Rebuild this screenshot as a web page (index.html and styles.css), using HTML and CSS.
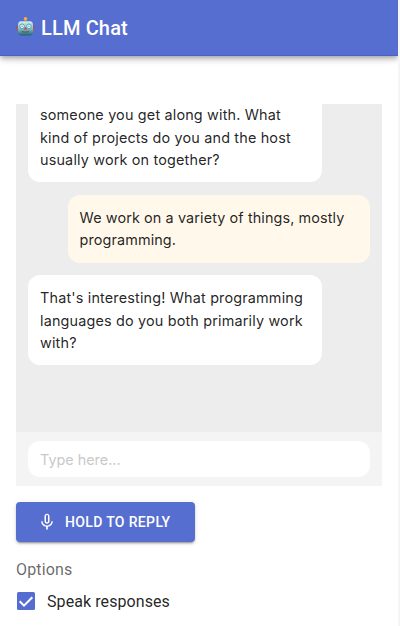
FILE: index.html
```html
<!DOCTYPE html>
<html lang="en">
<head>
<meta charset="utf-8">
<title>LLM Chat</title>
<link rel="stylesheet" href="styles.css">
</head>
<body>
<div class="app">
  <header class="app-bar">
    <svg class="robot" viewBox="0 0 18 19" aria-hidden="true">
      <defs>
        <linearGradient id="face" x1="0" y1="0" x2="0" y2="1">
          <stop offset="0" stop-color="#d3eeee"/><stop offset=".5" stop-color="#8fc0c6"/><stop offset="1" stop-color="#1c6475"/>
        </linearGradient>
      </defs>
      <path d="M8.200 2.500h1.600v3H8.200z" fill="#b3614e"/>
      <circle cx="9" cy="1.900" r="1.800" fill="#eeb13c"/>
      <rect x="0" y="9" width="18" height="5" rx="1.200" fill="#a84961"/>
      <path d="M4.500 4.200h9q2.700 0 2.900 3l.4 7q0 4.300-4 4.300H5.200q-4 0-4-4.300l.4-7q.2-3 2.900-3z" fill="url(#face)"/>
      <circle cx="5.600" cy="9.300" r="2.300" fill="#d9fbfc" stroke="#3d929d" stroke-width=".8"/>
      <circle cx="12.400" cy="9.300" r="2.300" fill="#d9fbfc" stroke="#3d929d" stroke-width=".8"/>
      <circle cx="5.600" cy="9.300" r=".8" fill="#68b7c4"/><circle cx="12.400" cy="9.300" r=".8" fill="#68b7c4"/>
      <path d="M9 9.800l1.600 2.600H7.400z" fill="#d9343d"/>
      <path d="M5.500 14.400q3.500 1.100 7 0" fill="none" stroke="#654f5c" stroke-width="1.100"/>
    </svg>
    <h1 class="title">LLM Chat</h1>
  </header>
  <main class="content">
    <section class="chat">
      <div class="messages">
        <div class="bubble">someone you get along with. What<br>kind of projects do you and the host<br>usually work on together?</div>
        <div class="bubble mine">We work on a variety of things, mostly<br>programming.</div>
        <div class="bubble">That's interesting! What programming<br>languages do you both primarily work<br>with?</div>
      </div>
      <div class="composer"><input class="field" type="text" placeholder="Type here..." aria-label="Message"></div>
    </section>
    <button class="reply" type="button">
      <svg class="mic" viewBox="0 0 24 24" aria-hidden="true"><path fill="currentColor" d="M12 14c1.660 0 3-1.340 3-3V5c0-1.660-1.340-3-3-3S9 3.340 9 5v6c0 1.660 1.340 3 3 3zm-1.200-9.100c0-.66.54-1.200 1.200-1.200s1.200.54 1.200 1.200l-.01 6.200c0 .66-.53 1.200-1.190 1.200s-1.200-.54-1.200-1.200V4.900zm6.500 6.100c0 3-2.540 5.100-5.300 5.100S6.700 14 6.700 11H5c0 3.410 2.720 6.230 6 6.720V21h2v-3.280c3.280-.48 6-3.300 6-6.720h-1.700z"/></svg>
      <span>HOLD TO REPLY</span>
    </button>
    <h2 class="options">Options</h2>
    <div class="option">
      <svg class="check" viewBox="0 0 18 18" aria-hidden="true"><rect width="18" height="18" rx="1.500" fill="#556cd0"/><path d="M2.700 9.300L7 13.600 15.300 5.200" fill="none" stroke="#fff" stroke-width="2"/></svg>
      <span>Speak responses</span>
    </div>
  </main>
</div>
</body>
</html>
```
FILE: styles.css
```css
* { box-sizing: border-box; }

body {
  margin: 0;
  height: 626px;
  overflow: hidden;
  background: #f5f5f5;
  color: rgba(0, 0, 0, 0.87);
  font-family: Roboto, sans-serif;
}

.app {
  width: 398px;
  height: 626px;
  overflow: hidden;
  background: #fff;
}

.app-bar {
  display: flex;
  align-items: center;
  height: 56px;
  padding: 0 16px;
  background: #566ecf;
  border-bottom: 1px solid #4a61d0;
  color: #fff;
  box-shadow: 0 2px 4px -1px rgba(0, 0, 0, 0.2), 0 4px 5px rgba(0, 0, 0, 0.14), 0 1px 10px rgba(0, 0, 0, 0.12);
}

.robot { width: 19px; height: 19px; margin: -3px 6px 0 0; }

.title {
  margin: 0;
  font-size: 20px;
  font-weight: 500;
  line-height: 32px;
  letter-spacing: 0.15px;
}

.content { padding: 48px 16px 0; }

.chat { display: flex; flex-direction: column; height: 382px; }

.messages {
  display: flex;
  flex: 1;
  flex-direction: column;
  align-items: flex-start;
  gap: 12.2px;
  padding: 0 12px;
  overflow: hidden;
  background: #ededed;
}

.bubble {
  width: 294.4px;
  padding: 12.5px 12px 11.1px;
  border-radius: 12px;
  background: #fff;
  font: 14.4px/22.3px Inter, sans-serif;
  letter-spacing: 0.17px;
  white-space: nowrap;
}

.bubble:first-child { padding-top: 0.4px; border-radius: 0 0 12px 12px; }

.bubble.mine {
  align-self: flex-end;
  width: 302.4px;
  background: #fff8eb;
  letter-spacing: 0.11px;
}

.composer { padding: 9px 12px; background: #f4f4f4; }

.field {
  display: block;
  width: 100%;
  height: 36px;
  padding: 0 12px;
  border: 0;
  border-radius: 12px;
  outline: 0;
  background: #fff;
  font: 14.4px Inter, sans-serif;
}

.field::placeholder { color: #c9c9c9; opacity: 1; }

.reply {
  display: flex;
  align-items: center;
  width: 179px;
  height: 40px;
  margin-top: 16px;
  padding: 0 0 0 21px;
  border: 0;
  border-radius: 4px;
  background: #566ecf;
  color: #fff;
  font: 500 14px Roboto, sans-serif;
  letter-spacing: 0.35px;
  box-shadow: 0 3px 1px -2px rgba(0, 0, 0, 0.2), 0 2px 2px rgba(0, 0, 0, 0.14), 0 1px 5px rgba(0, 0, 0, 0.12);
}

.mic { width: 20px; height: 20px; margin-right: 8px; }

.options {
  margin: 16px 0 0;
  color: rgba(0, 0, 0, 0.6);
  font-size: 16px;
  font-weight: 400;
  line-height: 23px;
  letter-spacing: 0.15px;
}

.option {
  display: flex;
  align-items: center;
  gap: 12px;
  height: 40px;
  padding-left: 1px;
  font-size: 16px;
  letter-spacing: 0.08px;
}

.check { width: 18px; height: 18px; }
```
